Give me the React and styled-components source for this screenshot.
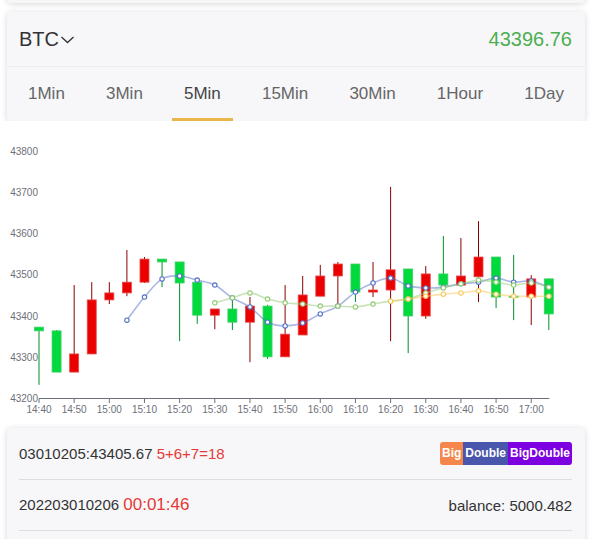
import React from "react"
import styled, { createGlobalStyle } from "styled-components"

const GlobalStyle = createGlobalStyle`
  body {
    margin: 0;
    background: #ffffff;
    font-family: "Liberation Sans", Arial, sans-serif;
    color: #333;
  }
`

const Page = styled.div`
  width: 592px;
  height: 539px;
  overflow: hidden;
  padding: 0 7px;
  box-sizing: border-box;
`

const Card = styled.div`
  background: #f7f7fa;
  border-radius: 4px;
  box-shadow: 0 1px 6px rgba(0, 0, 0, 0.16);
`

const StubCard = styled(Card)`
  height: 40px;
  margin-top: -37px;
  margin-bottom: 9px;
`

const Header = styled.div`
  height: 54px;
  display: flex;
  align-items: center;
  justify-content: space-between;
  padding: 0 13px 0 12px;
  border-bottom: 1px solid #ececf2;
`

const Symbol = styled.div`
  display: flex;
  align-items: center;
  font-size: 20px;
  color: #333;
`

const Price = styled.div`
  font-size: 20px;
  color: #4caf50;
`

const Tabs = styled.div`
  height: 54px;
  display: flex;
  justify-content: space-between;
  padding: 0 9px;
`

const Tab = styled.div`
  display: flex;
  align-items: center;
  padding: 0 12px;
  font-size: 17px;
  color: ${(p) => (p.$active ? "#444" : "#666")};
  border-bottom: 3px solid ${(p) => (p.$active ? "#e8b64a" : "transparent")};
  box-sizing: border-box;
  padding-top: 3px;
`

const ChartWrap = styled.div`
  margin: 0 -7px;
  height: 307px;
  background: #fff;
`

const InfoCard = styled(Card)`
  padding-bottom: 20px;
`

const Row = styled.div`
  margin: 0 13px 0 12px;
  height: ${(p) => p.$h}px;
  display: flex;
  align-items: center;
  justify-content: space-between;
  border-bottom: 1px solid #dcdce4;
  font-size: 15px;
  color: #333;
`

const Red = styled.span`
  color: #e53935;
  font-size: ${(p) => p.$size || 15}px;
`

const Badges = styled.div`
  display: flex;
  border-radius: 3px;
  overflow: hidden;
`

const Badge = styled.span`
  height: 23px;
  line-height: 23px;
  padding: 0 2px;
  font-size: 12px;
  font-weight: bold;
  color: #fff;
  background: ${(p) => p.$bg};
`

const Chevron = () => (
  <svg width="15" height="10" viewBox="0 0 15 10" style={{ marginLeft: 1, marginTop: 2 }}>
    <polyline points="1.5,2 7.5,7.5 13.5,2" fill="none" stroke="#333" strokeWidth="1.3" />
  </svg>
)

const candles = [
  [43373, 43364, 43233, 43373],
  [43364, 43264, 43264, 43366],
  [43264, 43308, 43264, 43475],
  [43308, 43439, 43308, 43482],
  [43439, 43456, 43429, 43482],
  [43456, 43482, 43448, 43560],
  [43482, 43538, 43480, 43543],
  [43538, 43531, 43470, 43538],
  [43531, 43480, 43339, 43531],
  [43482, 43402, 43381, 43482],
  [43402, 43417, 43368, 43417],
  [43417, 43385, 43366, 43444],
  [43385, 43424, 43288, 43446],
  [43424, 43301, 43296, 43427],
  [43301, 43356, 43301, 43475],
  [43354, 43451, 43354, 43497],
  [43448, 43497, 43448, 43524],
  [43497, 43526, 43424, 43531],
  [43526, 43458, 43434, 43526],
  [43458, 43463, 43446, 43531],
  [43463, 43512, 43339, 43713],
  [43514, 43400, 43310, 43514],
  [43400, 43502, 43393, 43521],
  [43502, 43475, 43463, 43594],
  [43475, 43497, 43475, 43589],
  [43495, 43543, 43434, 43630],
  [43543, 43446, 43419, 43543],
  [43448, 43446, 43390, 43548],
  [43446, 43490, 43378, 43499],
  [43490, 43405, 43366, 43490],
]

const ma = [
  {
    from: 5,
    color: "#5470c6",
    data: [43390, 43446, 43490, 43497, 43487, 43475, 43444, 43422, 43385, 43376, 43383, 43405, 43424, 43458, 43480, 43492, 43473, 43468, 43470, 43478, 43482, 43492, 43482, 43485, 43470],
  },
  {
    from: 10,
    color: "#91cc75",
    data: [43432, 43444, 43456, 43441, 43432, 43429, 43424, 43424, 43422, 43429, 43436, 43441, 43456, 43468, 43478, 43487, 43482, 43475, 43480, 43470],
  },
  {
    from: 20,
    color: "#fac858",
    data: [43436, 43441, 43448, 43453, 43456, 43461, 43453, 43448, 43448, 43448],
  },
]

const times = ["14:40", "14:50", "15:00", "15:10", "15:20", "15:30", "15:40", "15:50", "16:00", "16:10", "16:20", "16:30", "16:40", "16:50", "17:00"]

const X0 = 39
const STEP = 17.58
const xOf = (i) => X0 + i * STEP
const yOf = (p) => 277.5 - (p - 43200) * 0.4125

const smoothPath = (pts) => {
  let d = `M${pts[0].x},${pts[0].y}`
  for (let i = 0; i < pts.length - 1; i++) {
    const p0 = pts[i - 1] || pts[i]
    const p1 = pts[i]
    const p2 = pts[i + 1]
    const p3 = pts[i + 2] || p2
    const c1x = p1.x + (p2.x - p0.x) / 6
    const c1y = p1.y + (p2.y - p0.y) / 6
    const c2x = p2.x - (p3.x - p1.x) / 6
    const c2y = p2.y - (p3.y - p1.y) / 6
    d += ` C${c1x},${c1y} ${c2x},${c2y} ${p2.x},${p2.y}`
  }
  return d
}

const axisText = { fontFamily: "Liberation Sans, Arial, sans-serif", fontSize: 10, fill: "#6e7079" }

const Chart = () => (
  <svg width="592" height="300" viewBox="0 0 592 300">
    {[43200, 43300, 43400, 43500, 43600, 43700, 43800].map((p) => (
      <text key={p} x="38" y={yOf(p) + 3.5} textAnchor="end" style={axisText}>
        {p}
      </text>
    ))}
    <line x1={X0} x2={xOf(29) + 0.5} y1="277.5" y2="277.5" stroke="#6e7079" />
    {times.map((t, k) => (
      <g key={t}>
        <line x1={xOf(k * 2)} x2={xOf(k * 2)} y1="277.5" y2="282" stroke="#6e7079" />
        <text x={xOf(k * 2)} y="291.5" textAnchor="middle" style={axisText}>
          {t}
        </text>
      </g>
    ))}
    {candles.map(([o, c, l, h], i) => {
      const up = c > o
      const x = xOf(i)
      const top = yOf(Math.max(o, c))
      const bot = yOf(Math.min(o, c))
      return (
        <g key={i}>
          <line x1={x} x2={x} y1={yOf(h)} y2={yOf(l)} stroke={up ? "#8a0000" : "#008f28"} />
          <rect
            x={x - 4.5}
            y={top}
            width="9"
            height={Math.max(bot - top, 1)}
            fill={up ? "#eb0000" : "#00da3c"}
            stroke={up ? "#e84a4a" : "#3fcf68"}
            strokeWidth="0.8"
          />
        </g>
      )
    })}
    {ma.map((m) => {
      const pts = m.data.map((p, k) => ({ x: xOf(m.from + k), y: yOf(p) }))
      return (
        <g key={m.color}>
          <path d={smoothPath(pts)} fill="none" stroke={m.color} strokeOpacity="0.5" strokeWidth="1.6" />
          {pts.map((pt, k) => (
            <circle key={k} cx={pt.x} cy={pt.y} r="2.2" fill="#fff" stroke={m.color} strokeWidth="1.1" />
          ))}
        </g>
      )
    })}
  </svg>
)

const tabs = ["1Min", "3Min", "5Min", "15Min", "30Min", "1Hour", "1Day"]

export default function App() {
  return (
    <Page>
      <GlobalStyle />
      <StubCard />
      <Card>
        <Header>
          <Symbol>
            BTC
            <Chevron />
          </Symbol>
          <Price>43396.76</Price>
        </Header>
        <Tabs>
          {tabs.map((t) => (
            <Tab key={t} $active={t === "5Min"}>
              {t}
            </Tab>
          ))}
        </Tabs>
      </Card>
      <ChartWrap>
        <Chart />
      </ChartWrap>
      <InfoCard>
        <Row $h={51}>
          <span>
            03010205:43405.67 <Red>5+6+7=18</Red>
          </span>
          <Badges>
            <Badge $bg="#f5874c">Big</Badge>
            <Badge $bg="#4a56ab">Double</Badge>
            <Badge $bg="#7d00e0">BigDouble</Badge>
          </Badges>
        </Row>
        <Row $h={50}>
          <span>
            202203010206 <Red $size={17}>00:01:46</Red>
          </span>
          <span>balance: 5000.482</span>
        </Row>
      </InfoCard>
    </Page>
  )
}
